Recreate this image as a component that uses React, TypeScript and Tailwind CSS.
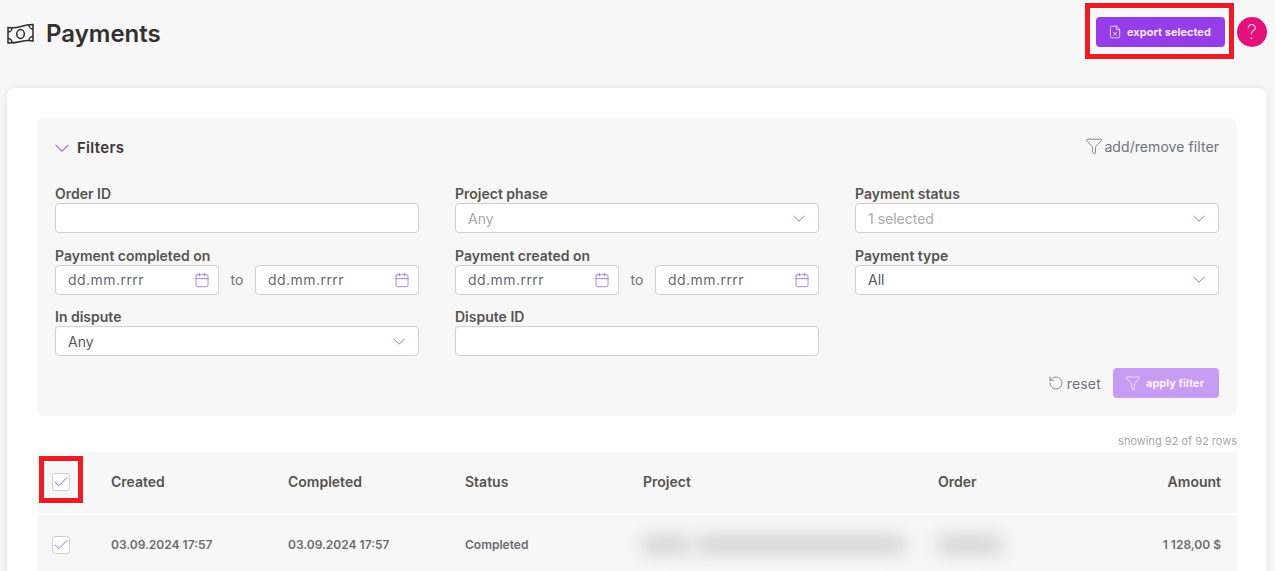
import { Calendar, Check, FileX, Funnel, RotateCcw } from 'lucide-react';

function Chevron({ width = 11 }: { width?: number }) {
  return (
    <svg width={width} height={width / 2 + 1} viewBox="0 0 22 12" fill="none" stroke="#a566ee" strokeWidth="1.8">
      <path d="M1 1 L11 11 L21 1" />
    </svg>
  );
}

function Label({ children }: { children: React.ReactNode }) {
  return <div className="h-[20px] text-[14px] leading-[21px] font-semibold text-[#57534e]">{children}</div>;
}

function Field({ label, children }: { label: string; children?: React.ReactNode }) {
  return (
    <div>
      <Label>{label}</Label>
      {children}
    </div>
  );
}

function TextBox() {
  return <div className="h-[30px] rounded border border-[#cfcfcf] bg-white" />;
}

function SelectBox({ value, muted }: { value: string; muted?: boolean }) {
  return (
    <div className="flex h-[30px] items-center justify-between rounded border border-[#cfcfcf] bg-white pr-[13px] pl-[12px]">
      <span className={muted ? 'text-[14px] text-[#a8a8a8]' : 'text-[14px] text-[#57575f]'}>{value}</span>
      <Chevron width={12} />
    </div>
  );
}

function DateBox() {
  return (
    <div className="flex h-[30px] w-[164px] items-center justify-between rounded border border-[#cfcfcf] bg-white pr-[8px] pl-[12px]">
      <span className="text-[14px] tracking-[0.45px] text-[#6b6b73]">dd.mm.rrrr</span>
      <Calendar size={16} strokeWidth={1.3} className="text-[#a672e0]" />
    </div>
  );
}

function DateRange() {
  return (
    <div className="flex items-center justify-between">
      <DateBox />
      <span className="text-[14px] text-[#71717a]">to</span>
      <DateBox />
    </div>
  );
}

function Checkbox() {
  return (
    <div className="flex h-[18px] w-[18px] items-center justify-center rounded-[3px] border border-[#cfcfcf] bg-white">
      <Check size={18} strokeWidth={1.2} className="shrink-0 text-[#9d55ec]" />
    </div>
  );
}

const tableCols = 'grid grid-cols-[74px_177px_177px_178px_295px_1fr_auto] items-center pr-[16px]';

export default function App() {
  return (
    <div className="h-[571px] w-[1275px] overflow-hidden bg-[#f7f7f7] font-['Inter',sans-serif]">
      <header className="relative flex h-[88px] items-start justify-between pr-[8px] pl-[7px]">
        <div className="flex items-center gap-[12px] pt-[19px]">
          <svg width="27" height="22" viewBox="0 0 27 22" fill="none" stroke="#2f2b2b" strokeWidth="1.5">
            <path d="M1 4.5 Q8 5.5 14 3.5 T26 1.5 V18 Q20 17 14 18.5 T1 20 Z" />
            <ellipse cx="13.5" cy="11" rx="3.8" ry="4.4" />
            <path d="M1 9 A4 4 0 0 0 5 5 M26 6 A4 4 0 0 1 22 2 M1 15.5 A4 4 0 0 1 5 19.8 M26 13.5 A4 4 0 0 0 22 17.5" />
          </svg>
          <h1 className="text-[24px] leading-[30px] font-semibold text-[#333030]">Payments</h1>
        </div>
        <div className="flex items-center gap-[12px] pt-[17px]">
          <button className="flex h-[30px] w-[129px] items-center justify-start gap-[5px] rounded bg-[#953de8] pl-[12px] text-[11px] font-bold text-[#f3e8ff]">
            <FileX size={14} strokeWidth={1.5} />
            export selected
          </button>
          <div className="flex h-[30px] w-[30px] items-center justify-center rounded-full bg-[#e6107a] text-[20px] font-extralight text-[#fce7f3]">?</div>
        </div>
        <div className="absolute top-[3px] left-[1085px] h-[56px] w-[149px] border-[5px] border-[#ed1c24]" />
      </header>

      <main className="relative mr-[8px] ml-[7px] h-[600px] rounded-lg bg-white p-[30px] shadow-[0_0_6px_rgba(0,0,0,0.1)]">
        <section className="rounded-lg bg-[#f7f7f7] p-[18px]">
          <div className="mb-[25px] flex h-[22px] items-center justify-between">
            <div className="flex items-center gap-[8px] pt-[2px]">
              <Chevron width={14} />
              <span className="text-[15px] tracking-[0.3px] font-semibold text-[#3a3636]">Filters</span>
            </div>
            <div className="flex items-center gap-[1px] pb-[2px] text-[14px] tracking-[0.07px] text-[#6b7280]">
              <Funnel size={18} strokeWidth={1.1} />
              add/remove filter
            </div>
          </div>

          <div className="grid grid-cols-3 gap-x-[36px] gap-y-[11.5px]">
            <Field label="Order ID"><TextBox /></Field>
            <Field label="Project phase"><SelectBox value="Any" muted /></Field>
            <Field label="Payment status"><SelectBox value="1 selected" muted /></Field>
            <Field label="Payment completed on"><DateRange /></Field>
            <Field label="Payment created on"><DateRange /></Field>
            <Field label="Payment type"><SelectBox value="All" /></Field>
            <Field label="In dispute"><SelectBox value="Any" /></Field>
            <Field label="Dispute ID"><TextBox /></Field>
          </div>

          <div className="mt-[12px] flex items-center justify-end gap-[12px]">
            <div className="flex items-center gap-[3px] text-[14px] tracking-[0.2px] text-[#6b7280]">
              <RotateCcw size={16} strokeWidth={1.2} />
              reset
            </div>
            <button className="flex h-[30px] w-[106px] items-center justify-start gap-[5px] rounded bg-[#c89cf2] pl-[12px] text-[11px] font-bold text-[#f8f2fe]">
              <Funnel size={16} strokeWidth={1.2} />
              apply filter
            </button>
          </div>
        </section>

        <div className="flex h-[36px] items-end justify-end pb-[3px] text-[11px] text-[#a8a8a8]">showing 92 of 92 rows</div>

        <div className={`${tableCols} h-[61px] bg-[#f7f7f7] pb-[2px] text-[14px] font-semibold text-[#57534e]`}>
          <div className="pl-[15px]"><Checkbox /></div>
          <div>Created</div>
          <div>Completed</div>
          <div>Status</div>
          <div>Project</div>
          <div>Order</div>
          <div className="text-right">Amount</div>
        </div>

        <div className={`${tableCols} mt-[2px] h-[60px] bg-[#f7f7f7] text-[12px] font-semibold text-[#6b6b73]`}>
          <div className="pl-[15px]"><Checkbox /></div>
          <div>03.09.2024 17:57</div>
          <div>03.09.2024 17:57</div>
          <div>Completed</div>
          <div className="flex gap-[8px]">
            <div className="h-[16px] w-[46px] bg-[#cdcdcd] blur-[9px]" />
            <div className="h-[16px] w-[208px] bg-[#cdcdcd] blur-[9px]" />
          </div>
          <div><div className="h-[16px] w-[64px] bg-[#cdcdcd] blur-[9px]" /></div>
          <div className="text-right">1 128,00 $</div>
        </div>

        <div className="absolute top-[368px] left-[32px] h-[47px] w-[44px] border-[5px] border-[#ed1c24]" />
      </main>
    </div>
  );
}
